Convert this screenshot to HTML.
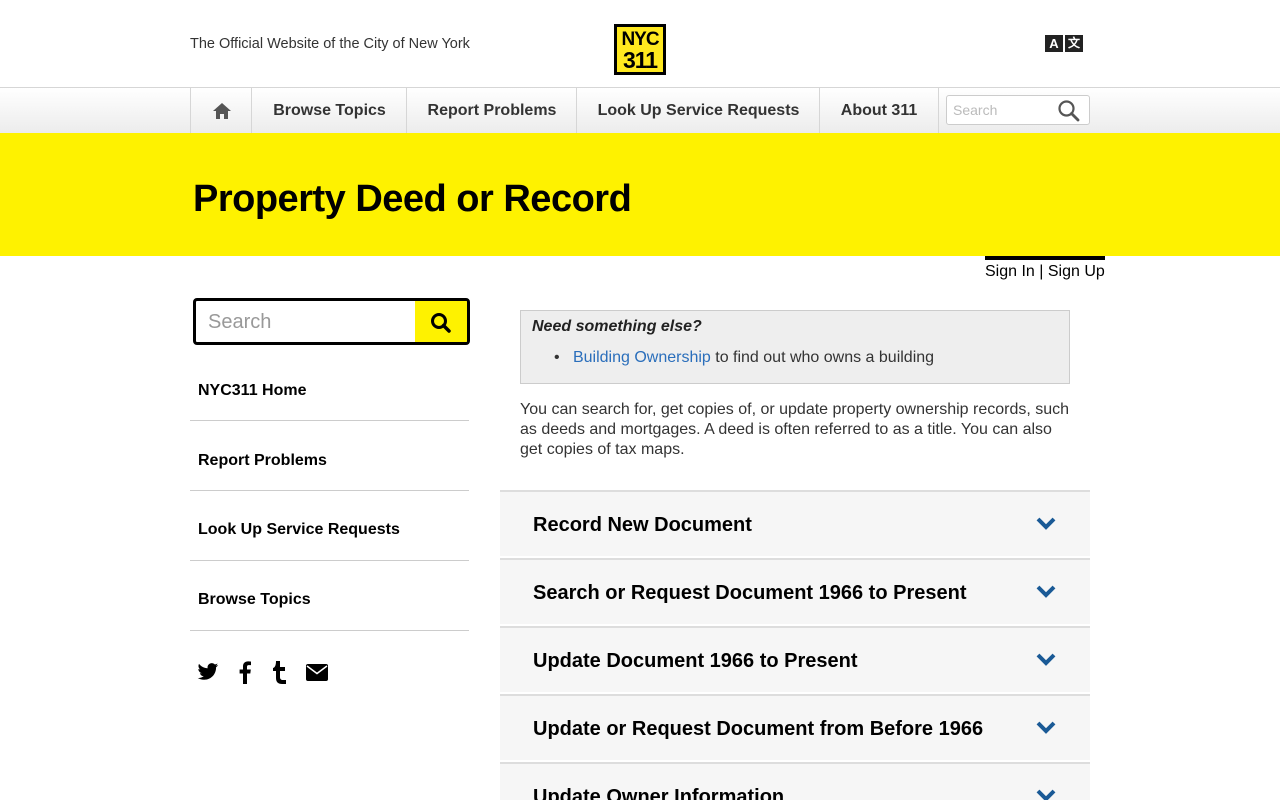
<!DOCTYPE html>
<html style="overflow:hidden;height:800px"><head><meta charset="utf-8"><style>
*{box-sizing:border-box;margin:0;padding:0}
body{width:1280px;height:800px;overflow:hidden;background:#fff;font-family:"Liberation Sans",Arial,sans-serif;color:#000;position:relative}
.abs{position:absolute}
.nav{position:absolute;top:87px;left:0;width:1280px;height:46px;border-top:1px solid #d6d6d6;background:linear-gradient(#fff,#ececec)}
.nav .it{position:absolute;top:0;height:45px;line-height:46px;font-weight:bold;font-size:16px;color:#333;text-align:center;border-left:1px solid #d6d6d6}
.lnav{position:absolute;left:190px;width:279px;height:70px;border-bottom:1px solid #ccc;font-weight:bold;font-size:16px;padding-left:8px;line-height:20px}
.acc{position:absolute;left:500px;width:590px;height:66px;background:#f6f6f6;border-top:2px solid #ddd;font-weight:bold;font-size:20px;padding-left:33px;line-height:66px;overflow:hidden}
.acc svg{position:absolute;left:536px;top:25px}
</style></head><body>
<div class="abs" style="left:190px;top:36px;font-size:14.5px;color:#333">The Official Website of the City of New York</div>
<div class="abs" style="left:614px;top:24px;width:52px;height:51px;background:#000;padding:3px">
 <div style="background:#ffe91f;width:46px;height:45px;font-weight:bold;font-size:19px;line-height:19px;text-align:center;letter-spacing:-1px;padding-top:3px">NYC<br><span style="font-size:23px;line-height:22px">311</span></div>
</div>
<div class="abs" style="left:1045px;top:35px;width:18px;height:17px;background:#222;color:#fff;font-weight:bold;font-size:13px;text-align:center;line-height:17px">A</div>
<div class="abs" style="left:1065px;top:35px;width:18px;height:17px;background:#222;color:#fff;font-weight:bold;font-size:12px;text-align:center;line-height:17px">文</div>
<div class="nav">
 <div class="it" style="left:190px;width:62px"><svg width="20" height="18" viewBox="0 0 20 18" style="vertical-align:middle"><path d="M10 1 L1 9 H4 V17 H8 V12 H12 V17 H16 V9 H19 Z" fill="#555"/></svg></div>
 <div class="it" style="left:251px;width:156px">Browse Topics</div>
 <div class="it" style="left:406px;width:171px">Report Problems</div>
 <div class="it" style="left:576px;width:244px">Look Up Service Requests</div>
 <div class="it" style="left:819px;width:120px;border-right:1px solid #d6d6d6">About 311</div>
 <div class="abs" style="left:946px;top:7px;width:144px;height:30px;border:1px solid #ccc;border-radius:3px;background:#fff;font-size:14px;color:#bbb;padding:6px 0 0 6px">Search
  <svg class="abs" style="left:110px;top:3px" width="24" height="24" viewBox="0 0 24 24"><circle cx="9.5" cy="9.5" r="7" fill="none" stroke="#555" stroke-width="2.2"/><path d="M14.5 14.5 L21 21" stroke="#555" stroke-width="2.8" stroke-linecap="round"/></svg></div>
</div>
<div class="abs" style="left:0;top:133px;width:1280px;height:123px;background:#fef200"></div>
<div class="abs" style="left:193px;top:178px;font-size:38px;font-weight:bold;letter-spacing:-0.5px">Property Deed or Record</div>
<div class="abs" style="left:985px;top:256px;width:120px;height:4px;background:#000"></div>
<div class="abs" style="left:985px;top:263px;font-size:16px">Sign In | Sign Up</div>
<div class="abs" style="left:193px;top:298px;width:277px;height:47px;border:3px solid #000;border-radius:4px;overflow:hidden">
 <div class="abs" style="left:12px;top:10px;font-size:20px;color:#999">Search</div>
 <div class="abs" style="right:0;top:0;width:52px;height:41px;background:#fef200"><svg class="abs" style="left:15px;top:11px" width="22" height="22" viewBox="0 0 22 22"><circle cx="9" cy="9" r="6.5" fill="none" stroke="#000" stroke-width="3"/><path d="M13.5 13.5 L19 19" stroke="#000" stroke-width="3.5" stroke-linecap="round"/></svg></div>
</div>
<div class="lnav" style="top:351px;padding-top:30px">NYC311 Home</div>
<div class="lnav" style="top:421px;padding-top:30px">Report Problems</div>
<div class="lnav" style="top:491px;padding-top:29px">Look Up Service Requests</div>
<div class="lnav" style="top:561px;padding-top:29px">Browse Topics</div>
<svg class="abs" style="left:197px;top:662px" width="22" height="20" viewBox="0 0 24 20"><path d="M23 2.5c-.8.4-1.7.6-2.6.7.9-.6 1.6-1.4 2-2.5-.9.5-1.9.9-2.9 1.1C18.6.9 17.4.3 16.1.3c-2.5 0-4.6 2-4.6 4.600 0 .4 0 .7.1 1C7.800 5.700 4.400 3.900 2.200 1.100c-.4.700-.6 1.500-.6 2.300 0 1.600.8 3 2 3.800-.7 0-1.500-.2-2.100-.6v.1c0 2.200 1.600 4.100 3.700 4.500-.4.100-.8.200-1.200.2-.3 0-.6 0-.9-.1.600 1.800 2.300 3.200 4.300 3.200-1.600 1.200-3.600 2-5.700 2-.4 0-.7 0-1.100-.1 2 1.300 4.500 2.100 7.100 2.100 8.500 0 13.100-7 13.100-13.100v-.6c.9-.6 1.700-1.400 2.300-2.300z" fill="#000"/></svg>
<svg class="abs" style="left:239px;top:661px" width="12" height="23" viewBox="0 0 12 23"><path d="M8 23V12.5h3.3l.5-4H8V6c0-1.100.3-1.900 1.900-1.900H12V.6C11.600.5 10.400.4 9 .4 6 .4 4 2.200 4 5.500v3H.6v4H4V23z" fill="#000"/></svg>
<svg class="abs" style="left:272px;top:661px" width="15" height="23" viewBox="0 0 15 23"><path d="M4 0h4v6h5v4H8v6c0 2 1 3 3 3h3v4h-4c-4 0-6-2-6-6v-7H1V7c2-.5 3-3 3-7z" fill="#000"/></svg>
<svg class="abs" style="left:306px;top:664px" width="22" height="17" viewBox="0 0 22 17"><rect x="0" y="0" width="22" height="17" rx="2" fill="#000"/><path d="M1 2 L11 9.5 L21 2" fill="none" stroke="#fff" stroke-width="1.5"/></svg>
<div class="abs" style="left:520px;top:310px;width:550px;height:74px;background:#eee;border:1px solid #ccc">
 <div class="abs" style="left:11px;top:7px;font-size:16px;font-weight:bold;font-style:italic;color:#222">Need something else?</div>
 <div class="abs" style="left:33px;top:38px;font-size:16px;color:#333">•&nbsp;&nbsp; <span style="color:#2a6ebb">Building Ownership</span> to find out who owns a building</div>
</div>
<div class="abs" style="left:520px;top:400px;width:552px;font-size:16px;line-height:20px;color:#333">You can search for, get copies of, or update property ownership records, such as deeds and mortgages. A deed is often referred to as a title. You can also get copies of tax maps.</div>
<div class="acc" style="top:490px">Record New Document<svg width="20" height="14" viewBox="0 0 20 14"><path d="M2 2 L10 10 L18 2" fill="none" stroke="#1a5a96" stroke-width="4"/></svg></div>
<div class="acc" style="top:558px">Search or Request Document 1966 to Present<svg width="20" height="14" viewBox="0 0 20 14"><path d="M2 2 L10 10 L18 2" fill="none" stroke="#1a5a96" stroke-width="4"/></svg></div>
<div class="acc" style="top:626px">Update Document 1966 to Present<svg width="20" height="14" viewBox="0 0 20 14"><path d="M2 2 L10 10 L18 2" fill="none" stroke="#1a5a96" stroke-width="4"/></svg></div>
<div class="acc" style="top:694px">Update or Request Document from Before 1966<svg width="20" height="14" viewBox="0 0 20 14"><path d="M2 2 L10 10 L18 2" fill="none" stroke="#1a5a96" stroke-width="4"/></svg></div>
<div class="acc" style="top:762px;height:38px">Update Owner Information<svg width="20" height="14" viewBox="0 0 20 14"><path d="M2 2 L10 10 L18 2" fill="none" stroke="#1a5a96" stroke-width="4"/></svg></div>
</body></html>
